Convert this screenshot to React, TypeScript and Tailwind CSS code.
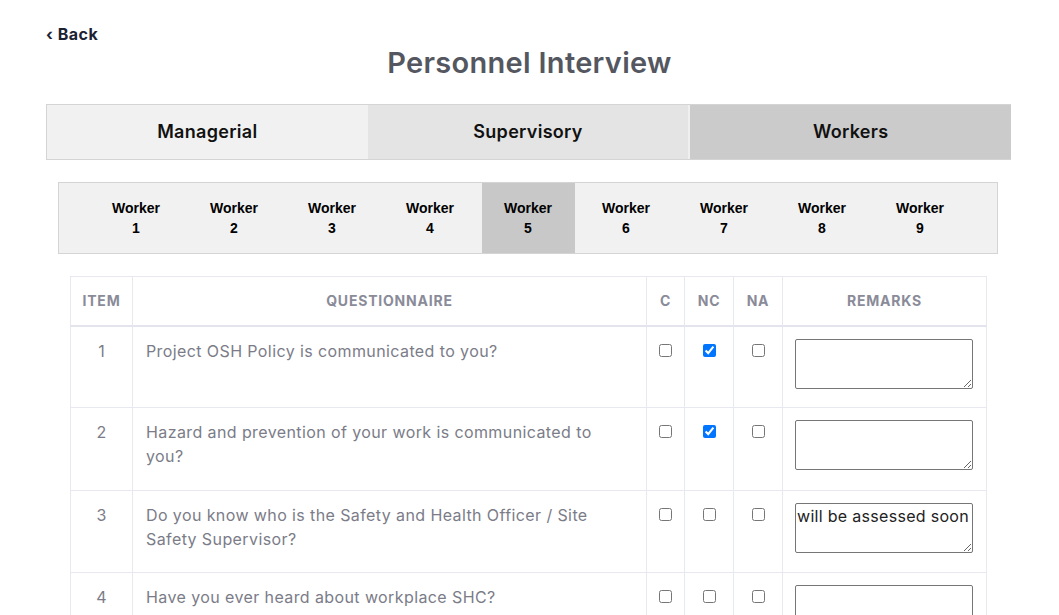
import { useState } from "react";

const workers = [1, 2, 3, 4, 5, 6, 7, 8, 9];

const questions = [
  { q: "Project OSH Policy is communicated to you?", nc: true, remark: "" },
  { q: "Hazard and prevention of your work is communicated to you?", nc: true, remark: "" },
  { q: "Do you know who is the Safety and Health Officer / Site Safety Supervisor?", nc: false, remark: "will be assessed soon" },
  { q: "Have you ever heard about workplace SHC?", nc: false, remark: "" },
];

export default function App() {
  const [tab, setTab] = useState("Workers");
  const [worker, setWorker] = useState(5);

  const tabs = [
    { name: "Managerial", cls: "bg-[#f1f1f1]" },
    { name: "Supervisory", cls: "bg-[#e4e4e4]" },
    { name: "Workers", cls: "bg-[#cbcbcb] border-l-2 border-[#efefef]" },
  ];

  return (
    <div className="min-h-screen bg-white font-['Inter',sans-serif]">
      <div className="px-[46px] pt-[24px]">
        <a href="#" className="block text-[16px] leading-[20px] font-bold tracking-[0.5px] text-[#1d2233]">
          ‹ Back
        </a>
        <h1 className="text-center text-[29px] leading-[38px] font-semibold tracking-[0.3px] text-[#54575f]">
          Personnel Interview
        </h1>

        <div className="mt-[22px] flex w-[965px] h-[56px] border border-[#d4d4d4] border-r-0">
          {tabs.map((t) => (
            <button
              key={t.name}
              onClick={() => setTab(t.name)}
              className={`flex-1 pb-[2px] text-[18px] font-semibold tracking-[0.3px] text-[#111] ${t.cls} ${
                tab === t.name ? "" : ""
              }`}
            >
              {t.name}
            </button>
          ))}
        </div>

        <div className="mt-[22px] ml-[12px] w-[940px] h-[72px] flex justify-center gap-[5px] bg-[#f1f1f1] border border-[#d4d4d4]">
          {workers.map((w) => (
            <button
              key={w}
              onClick={() => setWorker(w)}
              className={`w-[93px] flex flex-col items-center justify-center text-[14px] leading-[20px] font-bold text-black font-['Liberation_Sans',sans-serif] ${
                worker === w ? "bg-[#c8c8c8]" : ""
              }`}
            >
              <span>Worker</span>
              <span>{w}</span>
            </button>
          ))}
        </div>

        <table className="mt-[22px] ml-[24px] w-[916px] border-collapse table-fixed">
          <colgroup>
            <col className="w-[62px]" />
            <col className="w-[514px]" />
            <col className="w-[38px]" />
            <col className="w-[49px]" />
            <col className="w-[49px]" />
            <col className="w-[204px]" />
          </colgroup>
          <thead>
            <tr className="h-[49px]">
              {["Item", "Questionnaire", "C", "NC", "NA", "Remarks"].map((h) => (
                <th
                  key={h}
                  className="border border-[#e8e8f0] border-b-2 border-b-[#e4e4ee] text-center text-[14px] font-bold tracking-[0.8px] uppercase text-[#8a8b99]"
                >
                  {h}
                </th>
              ))}
            </tr>
          </thead>
          <tbody>
            {questions.map((row, i) => (
              <tr key={i} className="h-[82.4px]">
                <td className="border border-[#e8e8f0] align-top pt-[12px] text-center text-[16px] leading-[24px] text-[#7b7c88]">
                  {i + 1}
                </td>
                <td className="border border-[#e8e8f0] align-top pt-[12px] pl-[13px] pr-[30px] text-[16px] leading-[24px] tracking-[0.4px] text-[#7b7c88]">
                  {row.q}
                </td>
                {[false, row.nc, false].map((c, j) => (
                  <td key={j} className="border border-[#e8e8f0] align-top pt-[12px]">
                    <div className="h-[23px] flex items-center justify-center">
                      <input type="checkbox" defaultChecked={c} className="m-0 w-[13px] h-[13px]" />
                    </div>
                  </td>
                ))}
                <td className="border border-[#e8e8f0] align-top pt-[12px] pl-[12px]">
                  <textarea
                    defaultValue={row.remark}
                    className="block w-[178px] h-[50px] border border-[#767676] rounded-[2px] px-[1px] py-0 text-[16px] leading-[24px] tracking-[0.3px] text-[#222] bg-white resize-y"
                  />
                </td>
              </tr>
            ))}
          </tbody>
        </table>
      </div>
    </div>
  );
}
